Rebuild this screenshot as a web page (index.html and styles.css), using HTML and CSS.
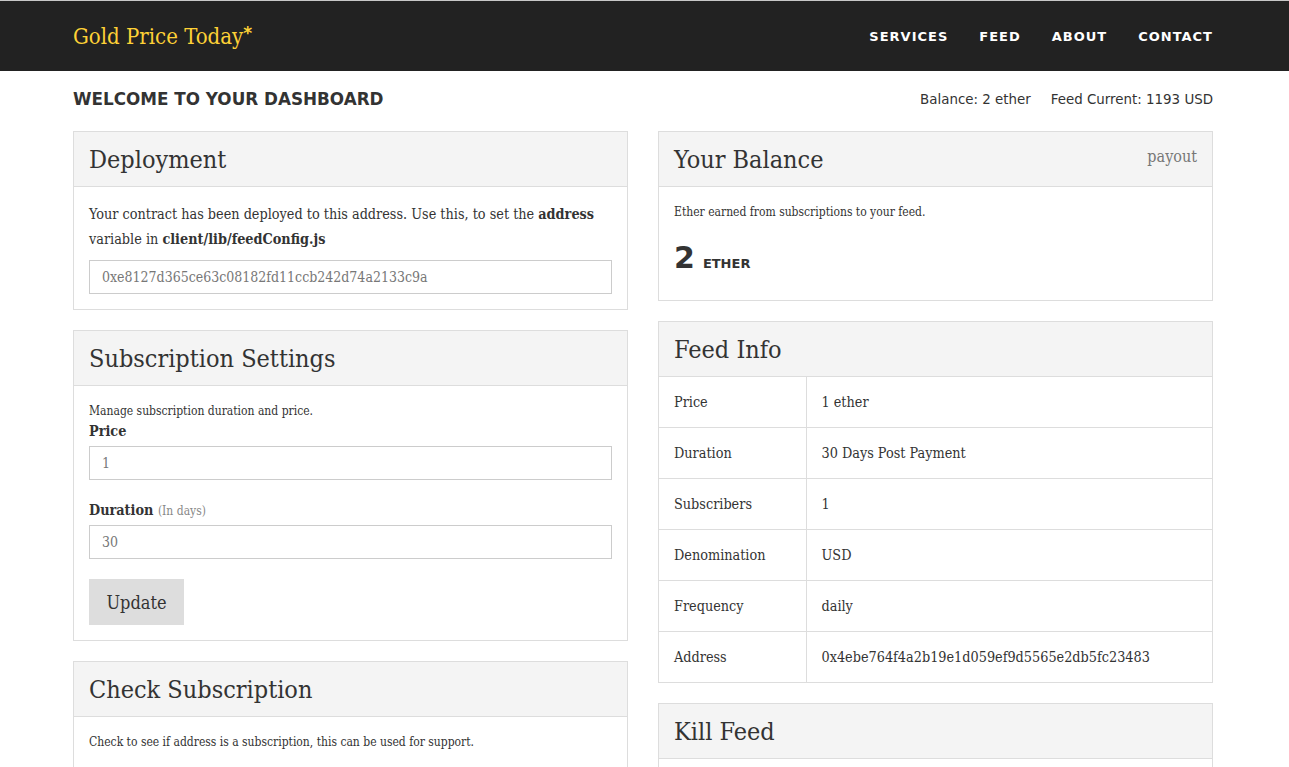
FILE: index.html
```html
<!DOCTYPE html>
<html lang="en">
<head>
<meta charset="utf-8">
<title>Gold Price Today - Dashboard</title>
<link rel="stylesheet" href="styles.css">
</head>
<body>
<nav class="navbar">
  <div class="container nav-inner">
    <a class="brand" href="#">Gold Price Today<span class="star">*</span></a>
    <ul class="nav-links">
      <li><a href="#">Services</a></li>
      <li><a href="#">Feed</a></li>
      <li><a href="#">About</a></li>
      <li><a href="#">Contact</a></li>
    </ul>
  </div>
</nav>

<main class="container">
  <div class="welcome-row">
    <h1 class="welcome">Welcome to your dashboard</h1>
    <div class="stats">
      <span>Balance: 2 ether</span>
      <span>Feed Current: 1193 USD</span>
    </div>
  </div>

  <div class="columns">
    <div class="col">
      <section class="panel">
        <div class="panel-heading"><h2>Deployment</h2></div>
        <div class="panel-body">
          <p class="lead-text">Your contract has been deployed to this address. Use this, to set the <b>address</b> variable in <b>client/lib/feedConfig.js</b></p>
          <input class="field" type="text" value="0xe8127d365ce63c08182fd11ccb242d74a2133c9a" readonly>
        </div>
      </section>

      <section class="panel">
        <div class="panel-heading"><h2>Subscription Settings</h2></div>
        <div class="panel-body">
          <p class="small">Manage subscription duration and price.</p>
          <div class="form-group">
            <label class="label">Price</label>
            <input class="field" type="text" value="1">
          </div>
          <div class="form-group">
            <label class="label">Duration <span class="muted">(In days)</span></label>
            <input class="field" type="text" value="30">
          </div>
          <button class="btn" type="button">Update</button>
        </div>
      </section>

      <section class="panel">
        <div class="panel-heading"><h2>Check Subscription</h2></div>
        <div class="panel-body">
          <p class="small">Check to see if address is a subscription, this can be used for support.</p>
        </div>
      </section>
    </div>

    <div class="col">
      <section class="panel">
        <div class="panel-heading heading-split"><h2>Your Balance</h2><a class="payout" href="#">payout</a></div>
        <div class="panel-body">
          <p class="small">Ether earned from subscriptions to your feed.</p>
          <div class="amount"><span class="num">2</span><span class="unit">ETHER</span></div>
        </div>
      </section>

      <section class="panel">
        <div class="panel-heading"><h2>Feed Info</h2></div>
        <table class="info">
          <tr><td>Price</td><td>1 ether</td></tr>
          <tr><td>Duration</td><td>30 Days Post Payment</td></tr>
          <tr><td>Subscribers</td><td>1</td></tr>
          <tr><td>Denomination</td><td>USD</td></tr>
          <tr><td>Frequency</td><td>daily</td></tr>
          <tr><td>Address</td><td>0x4ebe764f4a2b19e1d059ef9d5565e2db5fc23483</td></tr>
        </table>
      </section>

      <section class="panel">
        <div class="panel-heading"><h2>Kill Feed</h2></div>
        <div class="panel-body empty"></div>
      </section>
    </div>
  </div>
</main>
</body>
</html>
```

FILE: styles.css
```css
* { box-sizing: border-box; }

html, body {
  margin: 0;
  padding: 0;
  background: #fff;
  color: #333;
  font-family: "DejaVu Serif Condensed", "DejaVu Serif", serif;
  font-size: 14.3px;
}

a { text-decoration: none; }

.container {
  width: 1140px;
  margin: 0 76px 0 73px;
}

.navbar {
  background: #222;
  border-top: 1px solid #c8c8c8;
  height: 71px;
}

.nav-inner {
  display: flex;
  align-items: center;
  justify-content: space-between;
  height: 70px;
}

.brand {
  color: #fed136;
  font-size: 22px;
  font-family: "DejaVu Serif Condensed", "DejaVu Serif", serif;
}

.brand .star {
  font-family: "DejaVu Sans", sans-serif;
  font-weight: bold;
  font-size: 17px;
  vertical-align: 5px;
}

.nav-links {
  display: flex;
  gap: 31px;
  list-style: none;
  margin: 0;
  padding: 0;
}

.nav-links a {
  color: #fff;
  text-transform: uppercase;
  font-family: "DejaVu Sans", sans-serif;
  font-weight: bold;
  font-size: 13px;
  letter-spacing: 1px;
}

.welcome-row {
  display: flex;
  justify-content: space-between;
  align-items: center;
  margin: 18px 0 22px;
  height: 20px;
}

.welcome {
  margin: 0;
  font-family: "DejaVu Sans", sans-serif;
  font-weight: bold;
  font-size: 16.8px;
  text-transform: uppercase;
  color: #333;
}

.stats {
  display: flex;
  gap: 20px;
  font-family: "DejaVu Sans", sans-serif;
  font-size: 13.4px;
  color: #333;
}

.columns {
  display: grid;
  grid-template-columns: 555px 555px;
  gap: 30px;
}

.panel {
  border: 1px solid #ddd;
  margin-bottom: 20px;
  background: #fff;
}

.panel-heading {
  background: #f4f4f4;
  border-bottom: 1px solid #ddd;
  padding: 10px 15px;
  height: 55px;
}

.panel-heading h2 {
  margin: 0;
  font-weight: normal;
  font-size: 25px;
  line-height: 36px;
}

.heading-split {
  display: flex;
  justify-content: space-between;
  align-items: flex-start;
}

.payout {
  color: #777;
  font-size: 16px;
  line-height: 34px;
  margin-top: -2px;
}

.panel-body {
  padding: 15px;
}

.panel-body.empty {
  height: 50px;
}

.lead-text {
  margin: 0 0 8px;
  line-height: 25px;
}

.small {
  margin: 0;
  font-size: 12px;
  line-height: 20px;
}

.label {
  display: block;
  height: 20px;
  font-weight: bold;
  line-height: 20px;
  margin-bottom: 5px;
}

.label .muted {
  font-weight: normal;
  color: #888;
  font-size: 12px;
  line-height: 1;
}

.form-group {
  margin-bottom: 20px;
}

.field {
  display: block;
  width: 100%;
  height: 34px;
  border: 1px solid #ccc;
  padding: 0 12px;
  font-family: inherit;
  font-size: 14px;
  color: #777;
  background: #fff;
}

.btn {
  display: block;
  background: #ddd;
  border: none;
  width: 95px;
  height: 46px;
  font-family: inherit;
  font-size: 18px;
  color: #333;
  padding: 0;
}

.amount {
  display: flex;
  align-items: baseline;
  gap: 8px;
  height: 36px;
  margin: 18px 0 9px;
  font-family: "DejaVu Sans", sans-serif;
  font-weight: bold;
  line-height: 36px;
}

.amount .num {
  font-size: 30px;
}

.amount .unit {
  font-size: 13px;
}

.info {
  width: 100%;
  border-collapse: collapse;
}

.info td {
  border-top: 1px solid #ddd;
  padding: 15px;
  line-height: 20px;
}

.info tr:first-child td {
  border-top: none;
}

.info td:first-child {
  width: 147px;
  border-right: 1px solid #ddd;
}
```
